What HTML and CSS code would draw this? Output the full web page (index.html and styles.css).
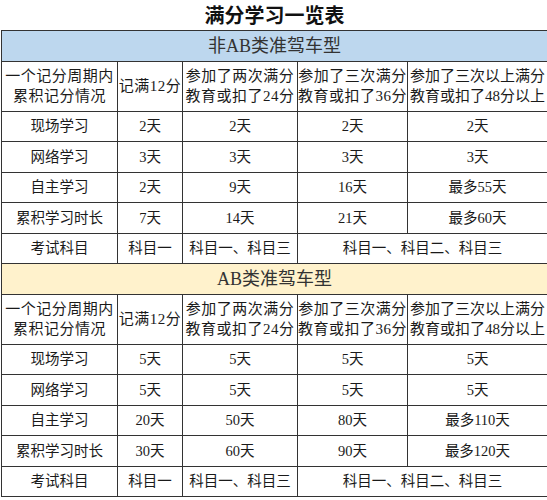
FILE: index.html
```html
<!DOCTYPE html>
<html lang="zh">
<head>
<meta charset="utf-8">
<link rel="stylesheet" href="styles.css">
</head>
<body>
<table class="sheet">
  <colgroup>
    <col class="c1"><col class="c2"><col class="c3"><col class="c4"><col class="c5">
  </colgroup>
  <tr class="title-row"><td colspan="5" class="title">满分学习一览表</td></tr>
  <tr class="sec-row"><td colspan="5" class="sec blue">非AB类准驾车型</td></tr>
  <tr class="head-row">
    <td>一个记分周期内<br>累积记分情况</td>
    <td>记满12分</td>
    <td>参加了两次满分<br>教育或扣了24分</td>
    <td>参加了三次满分<br>教育或扣了36分</td>
    <td>参加了三次以上满分<br>教育或扣了48分以上</td>
  </tr>
  <tr class="row"><td>现场学习</td><td>2天</td><td>2天</td><td>2天</td><td>2天</td></tr>
  <tr class="row"><td>网络学习</td><td>3天</td><td>3天</td><td>3天</td><td>3天</td></tr>
  <tr class="row"><td>自主学习</td><td>2天</td><td>9天</td><td>16天</td><td>最多55天</td></tr>
  <tr class="row"><td>累积学习时长</td><td>7天</td><td>14天</td><td>21天</td><td>最多60天</td></tr>
  <tr class="row"><td>考试科目</td><td>科目一</td><td>科目一、科目三</td><td colspan="2">科目一、科目二、科目三</td></tr>
  <tr class="sec-row"><td colspan="5" class="sec yellow">AB类准驾车型</td></tr>
  <tr class="head-row">
    <td>一个记分周期内<br>累积记分情况</td>
    <td>记满12分</td>
    <td>参加了两次满分<br>教育或扣了24分</td>
    <td>参加了三次满分<br>教育或扣了36分</td>
    <td>参加了三次以上满分<br>教育或扣了48分以上</td>
  </tr>
  <tr class="row"><td>现场学习</td><td>5天</td><td>5天</td><td>5天</td><td>5天</td></tr>
  <tr class="row"><td>网络学习</td><td>5天</td><td>5天</td><td>5天</td><td>5天</td></tr>
  <tr class="row"><td>自主学习</td><td>20天</td><td>50天</td><td>80天</td><td>最多110天</td></tr>
  <tr class="row"><td>累积学习时长</td><td>30天</td><td>60天</td><td>90天</td><td>最多120天</td></tr>
  <tr class="row"><td>考试科目</td><td>科目一</td><td>科目一、科目三</td><td colspan="2">科目一、科目二、科目三</td></tr>
</table>
</body>
</html>
```
FILE: styles.css
```css
html, body {
  margin: 0;
  padding: 0;
  background: #ffffff;
}
body {
  font-family: "Liberation Serif", "Noto Sans CJK SC", serif;
  color: #1a1a1a;
}
.sheet {
  border-collapse: collapse;
  table-layout: fixed;
  width: 546px;
  margin: 0 0 0 1px;
}
.c1 { width: 116px; }
.c2 { width: 65px; }
.c3 { width: 115px; }
.c4 { width: 110px; }
.c5 { width: 140px; }
.sheet td {
  border: 1.5px solid #333;
  text-align: center;
  vertical-align: middle;
  padding: 0;
  font-size: 15px;
  line-height: 20px;
  white-space: nowrap;
  overflow: hidden;
}
.title-row td.title {
  border-top: none;
  border-left: none;
  border-right: none;
  height: 30px;
  font-family: "Noto Sans CJK SC", sans-serif;
  font-weight: 700;
  font-size: 20px;
  color: #111;
  line-height: 30px;
}
.sec-row td.sec {
  height: 30px;
  font-size: 18px;
  color: #333;
  border-left: 1.5px solid #333;
}
.blue { background: #bdd7ee; }
.yellow { background: #fff2cc; }
.head-row td {
  height: 48.5px;
  font-size: 15px;
  letter-spacing: 0.5px;
}
.head-row td:nth-child(5) { letter-spacing: 0; }
.row td {
  height: 29.5px;
  font-size: 14.5px;
}
```
